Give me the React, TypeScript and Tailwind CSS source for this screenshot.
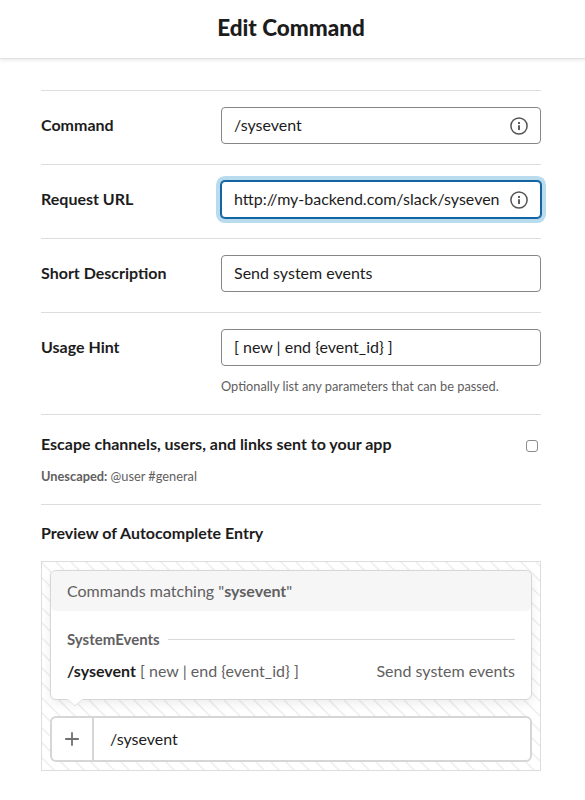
import React from "react";

function InfoIcon() {
  return (
    <svg className="absolute right-[12px] top-[9px] size-[18px]" viewBox="0 0 18 18" fill="none" stroke="#555456">
      <circle cx="9" cy="9" r="8.1" strokeWidth="1.5" />
      <path d="M9 8.2V13" strokeWidth="1.9" />
      <path d="M9 5V6.9" strokeWidth="1.9" />
    </svg>
  );
}

type FieldProps = {
  label: string;
  value: string;
  info?: boolean;
  focused?: boolean;
  hint?: string;
};

function Field({ label, value, info, focused, hint }: FieldProps) {
  return (
    <div className={`flex border-t border-[#dddddd] pt-4 ${hint ? "h-[102px]" : "h-[74px]"}`}>
      <div className="w-[180px] pt-[6px] text-[16px] font-bold leading-6">{label}</div>
      <div className="w-[320px]">
        <div
          className={`relative h-[37px] rounded-[4px] border bg-white pl-3 pt-[5px] text-[16px] leading-6 ${
            focused ? "border-[#1264a3] shadow-[0_0_0_1px_#1264a3,0_0_0_5px_#b8dcee]" : "border-[#868686]"
          }`}
        >
          <div className="w-[267px] overflow-hidden whitespace-nowrap">{value}</div>
          {info && <InfoIcon />}
        </div>
        {hint && <div className="pt-[10px] text-[12.8px] leading-5 text-[#616061]">{hint}</div>}
      </div>
    </div>
  );
}

function AutocompletePreview() {
  return (
    <div className="relative h-[210px] border border-[#dddddd] px-2 pt-2">
      <svg className="absolute inset-0 size-full">
        <defs>
          <pattern id="stripes" x="-1" width="15" height="15" patternUnits="userSpaceOnUse">
            <path d="M-1 -1L16 16M-1 14L1 16M14 -1L16 1" stroke="#eeeeee" strokeWidth="1.5" />
          </pattern>
        </defs>
        <rect width="100%" height="100%" fill="url(#stripes)" />
      </svg>
      <div className="relative h-[130px] rounded-[6px] border border-[#d6d6d6] bg-white shadow-[0_4px_10px_rgba(0,0,0,0.07)]">
        <div className="h-10 rounded-[5px] bg-[#f6f6f6] pl-4 pt-2 text-[16px] leading-6 text-[#616061]">
          Commands matching "<b>sysevent</b>"
        </div>
        <div className="mt-[17px] flex items-center gap-2 px-4 text-[15px] leading-[22px]">
          <b className="text-[#616061]">SystemEvents</b>
          <div className="h-px grow bg-[#d9d9d9]" />
        </div>
        <div className="mt-[9px] flex justify-between px-4 text-[16px] leading-6 text-[#616061]">
          <div>
            <b className="text-[#1d1c1d]">/sysevent</b> [ new | end {"{event_id}"} ]
          </div>
          <div>Send system events</div>
        </div>
        <svg className="absolute left-[16px] top-[127px] h-[9px] w-[16px]" viewBox="0 0 16 9">
          <path d="M0 0H16V1L8 8L0 1Z" fill="white" />
          <path d="M1 1.6L8 8L15 1.6" fill="none" stroke="#dddddd" strokeWidth="0.9" />
        </svg>
      </div>
      <div className="relative mt-4 flex h-[46px] rounded-[6px] border-2 border-[#d6d6d6] bg-white">
        <div className="flex w-[42px] items-center justify-center border-r-2 border-[#d6d6d6]">
          <svg className="size-[14px]" viewBox="0 0 14 14" stroke="#717171" strokeWidth="1.8">
            <path d="M7 0.2V13.8M0.2 7H13.8" />
          </svg>
        </div>
        <div className="pl-4 pt-[9px] text-[16px] leading-6">/sysevent</div>
      </div>
    </div>
  );
}

export default function App() {
  return (
    <div className="h-[800px] w-[585px] overflow-hidden bg-white font-['Lato',sans-serif] text-[#1d1c1d]">
      <header className="h-[59px] border-b border-[#e2e2e2] pr-[3px] pt-[12px] text-center text-[22.5px] font-black leading-8 shadow-[0_1px_4px_rgba(0,0,0,0.1)]">
        Edit Command
      </header>
      <main className="ml-[41px] mt-[31px] w-[500px]">
        <Field label="Command" value="/sysevent" info />
        <Field label="Request URL" value="http://my-backend.com/slack/syseven" info focused />
        <Field label="Short Description" value="Send system events" />
        <Field
          label="Usage Hint"
          value="[ new | end {event_id} ]"
          hint="Optionally list any parameters that can be passed."
        />
        <section className="h-[90px] border-t border-[#dddddd] pt-[17px]">
          <div className="flex justify-between text-[16px] font-bold leading-6">
            Escape channels, users, and links sent to your app
            <div className="mr-[3px] mt-[8px] size-[12px] rounded-[3px] border border-[#8b8b8b] bg-white" />
          </div>
          <div className="mt-[10px] text-[12.8px] leading-5 text-[#616061]">
            <b>Unescaped:</b> @user #general
          </div>
        </section>
        <section className="border-t border-[#dddddd] pt-4">
          <h2 className="mb-4 text-[16px] font-bold leading-6">Preview of Autocomplete Entry</h2>
          <AutocompletePreview />
        </section>
      </main>
    </div>
  );
}
